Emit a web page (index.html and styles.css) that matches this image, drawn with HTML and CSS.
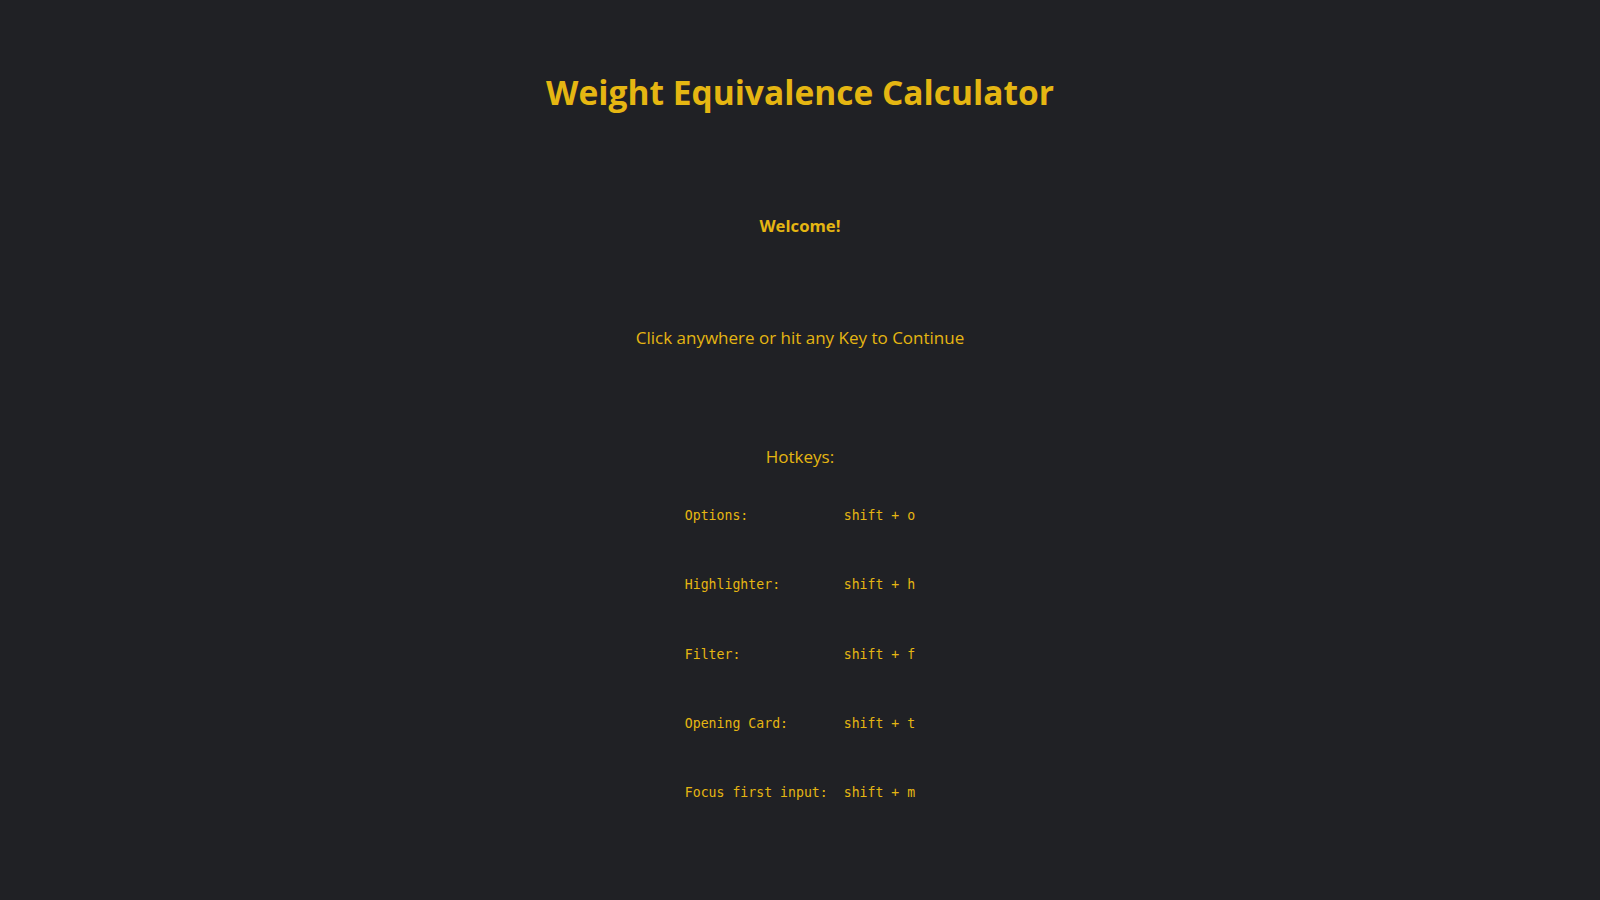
FILE: index.html
```html
<!DOCTYPE html>
<html lang="en">
<head>
<meta charset="utf-8">
<title>Weight Equivalence Calculator</title>
<link rel="stylesheet" href="styles.css">
</head>
<body>
<main class="page">
  <h1 class="title">Weight Equivalence Calculator</h1>
  <p class="welcome">Welcome!</p>
  <p class="prompt">Click anywhere or hit any Key to Continue</p>
  <h2 class="hotkeys-title">Hotkeys:</h2>
  <div class="hotkeys">
    <span class="key-label">Options:</span><span class="key-combo">shift + o</span>
    <span class="key-label">Highlighter:</span><span class="key-combo">shift + h</span>
    <span class="key-label">Filter:</span><span class="key-combo">shift + f</span>
    <span class="key-label">Opening Card:</span><span class="key-combo">shift + t</span>
    <span class="key-label">Focus first input:</span><span class="key-combo">shift + m</span>
  </div>
</main>
</body>
</html>
```

FILE: styles.css
```css
html, body {
  margin: 0;
  padding: 0;
  background: #202125;
  height: 100%;
}

body {
  color: #e5b612;
  font-family: "Open Sans", "Noto Sans", sans-serif;
}

.page {
  display: flex;
  flex-direction: column;
  align-items: center;
  text-align: center;
  padding-top: 67px;
}

.title {
  margin: 0;
  font-size: 33.5px;
  line-height: 50px;
  font-weight: 700;
}

.welcome {
  margin: 96px 0 0;
  font-size: 16.7px;
  line-height: 26px;
  font-weight: 700;
}

.prompt {
  margin: 85px 0 0;
  font-size: 17px;
  line-height: 28px;
}

.hotkeys-title {
  margin: 91px 0 0;
  font-size: 17px;
  line-height: 28px;
  font-weight: 400;
}

.hotkeys {
  margin-top: 35px;
  display: grid;
  grid-template-columns: auto auto;
  column-gap: 16px;
  row-gap: 49.3px;
  text-align: left;
  font-family: "DejaVu Sans Mono", "Liberation Mono", monospace;
  font-size: 13.2px;
  line-height: 20px;
}
```
